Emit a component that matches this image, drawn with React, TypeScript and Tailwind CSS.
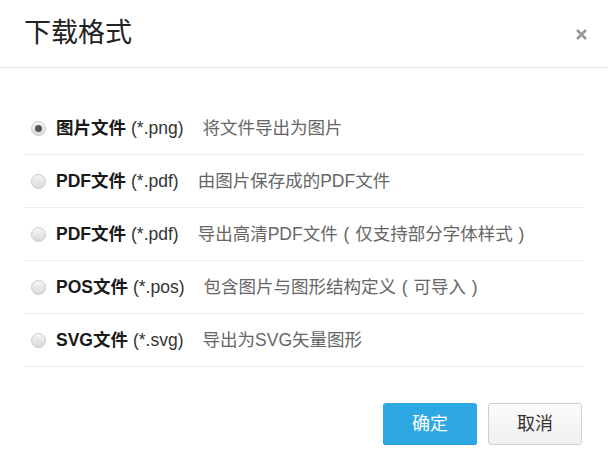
import { useState } from "react";
import type { ReactNode } from "react";

interface Format {
  id: string;
  name: string;
  ext: string;
  desc: ReactNode;
}

// full-width brackets drawn centred in their em box, as in the original dialog
const P = ({ c }: { c: string }) => <span className="inline-block w-[1em] text-center">{c}</span>;

const formats: Format[] = [
  { id: "png", name: "图片文件", ext: "(*.png)", desc: "将文件导出为图片" },
  { id: "pdf", name: "PDF文件", ext: "(*.pdf)", desc: "由图片保存成的PDF文件" },
  {
    id: "pdfhd",
    name: "PDF文件",
    ext: "(*.pdf)",
    desc: (
      <>
        导出高清PDF文件<P c="(" />仅支持部分字体样式<P c=")" />
      </>
    ),
  },
  {
    id: "pos",
    name: "POS文件",
    ext: "(*.pos)",
    desc: (
      <>
        包含图片与图形结构定义<P c="(" />可导入<P c=")" />
      </>
    ),
  },
  { id: "svg", name: "SVG文件", ext: "(*.svg)", desc: "导出为SVG矢量图形" },
];

function Radio({ checked }: { checked: boolean }) {
  return (
    <span className="flex h-[15px] w-[15px] shrink-0 items-center justify-center rounded-full border border-[#c9c9c9] bg-gradient-to-b from-[#f6f6f6] to-[#d9d9d9]">
      {checked && <span className="h-[7px] w-[7px] rounded-full bg-[#555]" />}
    </span>
  );
}

function App() {
  const [selected, setSelected] = useState("png");

  return (
    <div
      className="h-[468px] w-[608px] bg-white"
      style={{ fontFamily: '"Liberation Sans", "Noto Sans CJK SC", sans-serif' }}
    >
      <div className="flex h-[68px] items-center justify-between border-b border-[#e6e6e6] pl-6 pr-[21px]">
        <h1 className="text-[27px] font-normal text-[#222]">下载格式</h1>
        <button className="mt-[2px] text-[#999]">
          <svg width="11" height="11" viewBox="0 0 11 11">
            <path d="M1 1L10 10M10 1L1 10" stroke="currentColor" strokeWidth="2.6" />
          </svg>
        </button>
      </div>

      <div className="px-6 pt-[34px]">
        {formats.map((f) => (
          <label
            key={f.id}
            onClick={() => setSelected(f.id)}
            className="flex h-[53px] cursor-pointer items-center border-b border-[#ececec] pl-[7px] text-[17.5px]"
          >
            <Radio checked={selected === f.id} />
            <span className="ml-[10px] font-bold text-[#1a1a1a]">{f.name}</span>
            <span className="ml-[5px] text-[#333]">{f.ext}</span>
            <span className="ml-[19px] text-[#666]">{f.desc}</span>
          </label>
        ))}
      </div>

      <div className="flex justify-end gap-[11px] pr-[26px] pt-[36px]">
        <button className="h-[42px] w-[94px] rounded-[3px] bg-[#2ea8e2] text-[18px] text-white shadow-[inset_0_-1px_0_#1f95cf]">
          确定
        </button>
        <button className="h-[42px] w-[94px] rounded-[3px] border border-[#cfcfcf] bg-gradient-to-b from-[#fcfcfc] to-[#efefef] text-[18px] text-[#333]">
          取消
        </button>
      </div>
    </div>
  );
}

export default App;
